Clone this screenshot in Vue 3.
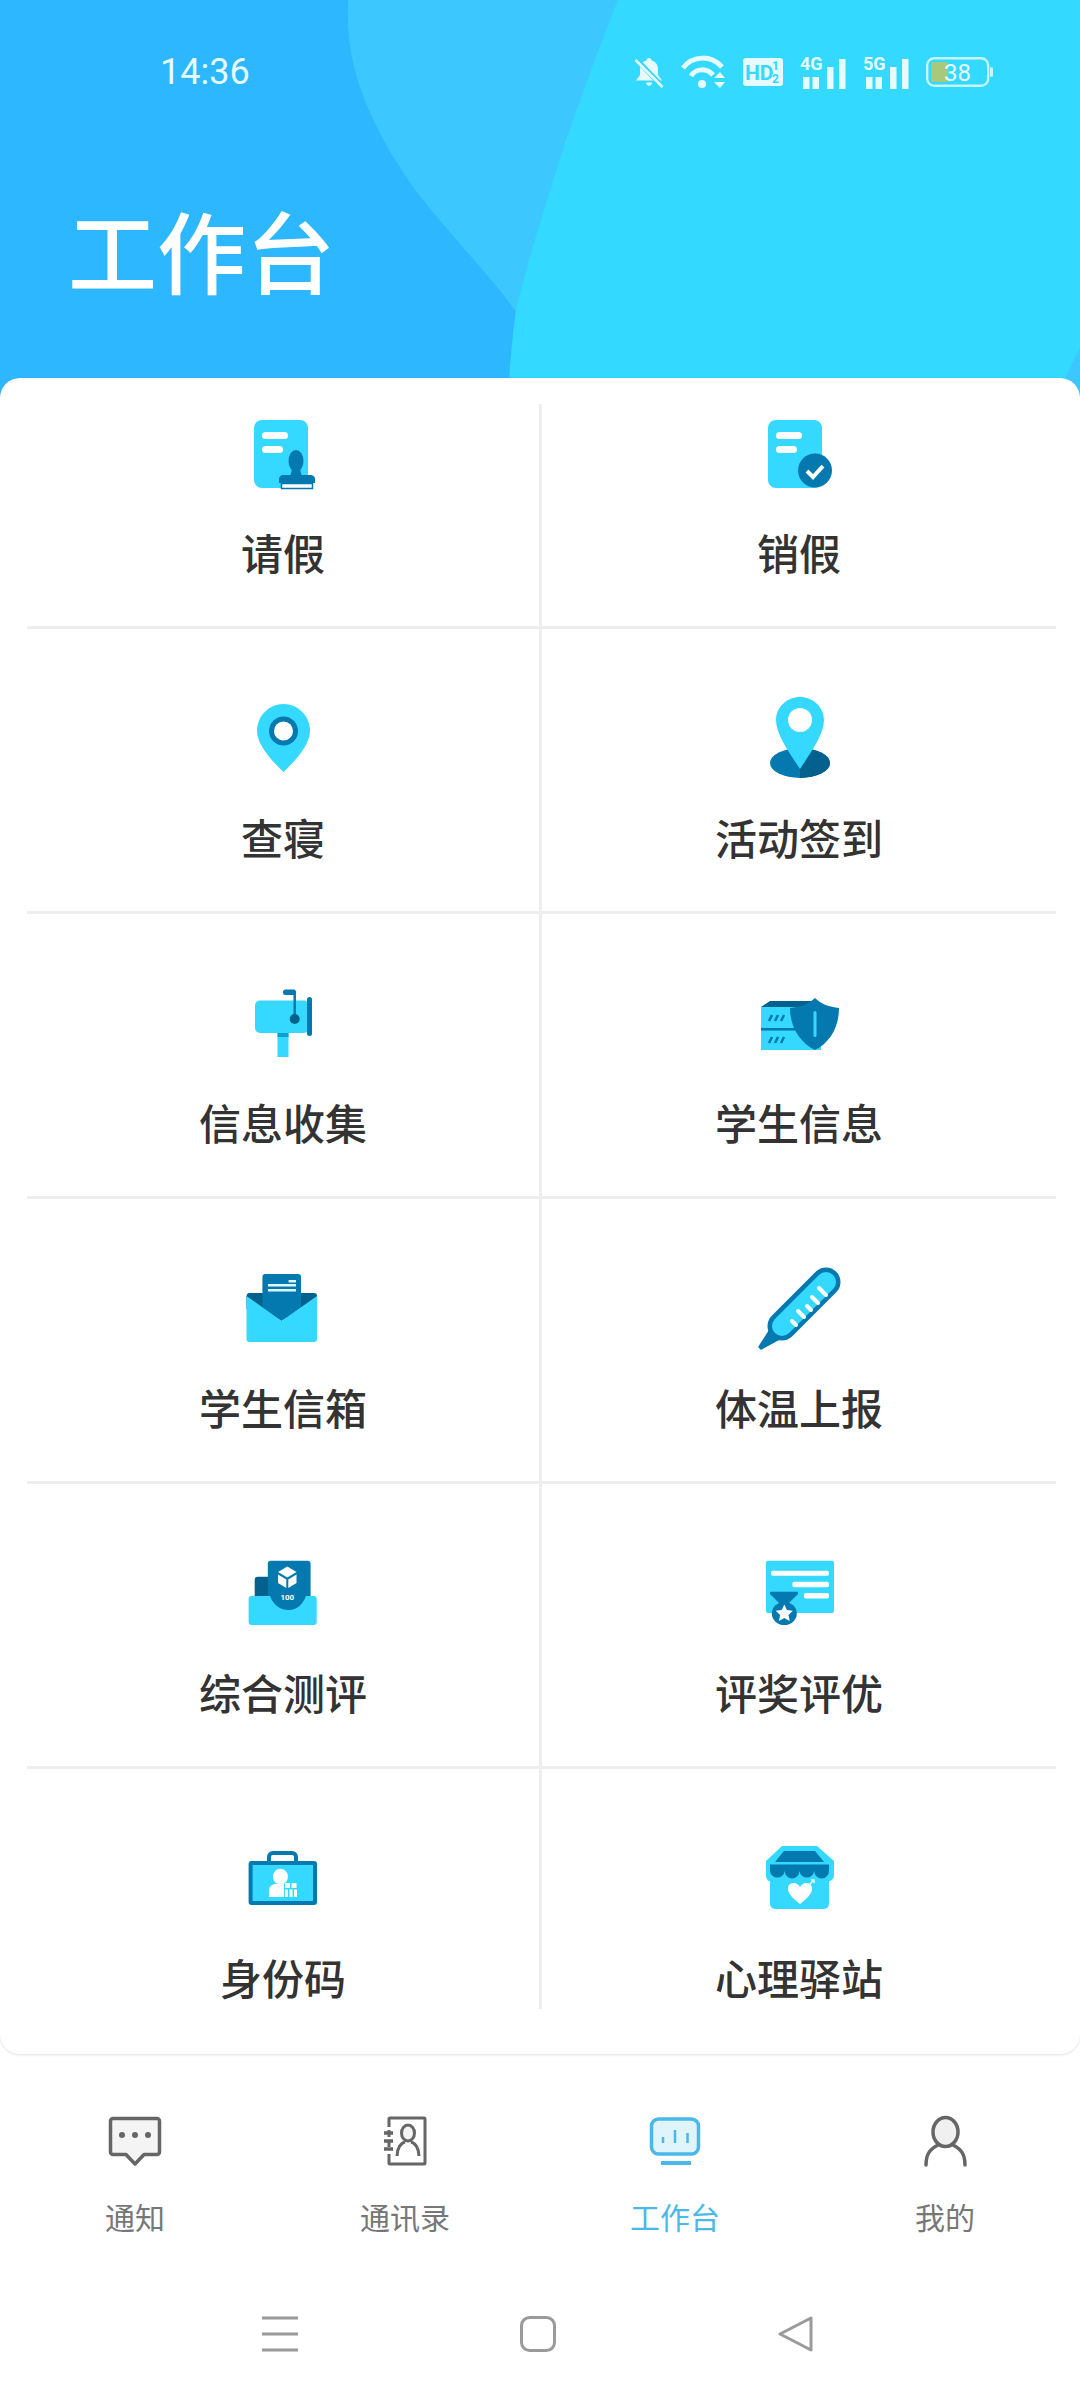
<script setup>
const tabs = [
  { key: 'notice', label: '通知' },
  { key: 'contacts', label: '通讯录' },
  { key: 'desk', label: '工作台', active: true },
  { key: 'me', label: '我的' }
]
</script>

<template>
  <div class="page">
    <header class="hero">
      <svg class="hero-bg" width="1080" height="400" viewBox="0 0 1080 400">
        <rect width="1080" height="400" fill="#2cb7ff" />
        <path d="M348 0C346 45 355 80 372 117C385 145 398 165 413 187C432 212 450 232 468 253C485 272 500 290 518 314L620 200L640 0Z" fill="#3cc8ff" />
        <path d="M618 0C600 45 580 100 565 143C550 190 528 260 516 310C512 340 510 360 508 400H1080V0Z" fill="#33d9ff" />
        <path d="M1058 400C1064 380 1072 362 1080 348V400Z" fill="#3cc8ff" />
      </svg>
      <div class="status">
        <span class="time">14:36</span>
        <div class="status-icons">
          <svg width="30" height="32" viewBox="0 0 30 32" fill="#e6fbff">
            <path d="M15 2c1.500 0 2.500 1 2.600 2.400C22 5.500 24 9 24 13v6l4 5.500H2L6 19v-6c0-4 2-7.500 6.400-8.600C12.500 3 13.500 2 15 2zM12 26.500h6c0 2-1.300 3.200-3 3.200s-3-1.200-3-3.200z" />
            <path d="M2 3l26 27" stroke="#33d9ff" stroke-width="5" />
            <path d="M1.500 4l27 27" stroke="#e6fbff" stroke-width="2.500" />
          </svg>
          <svg width="45" height="34" viewBox="0 0 45 34" fill="none" stroke="#e6fbff" stroke-width="5">
            <path d="M2 13C12 0 30 0 41 12" />
            <path d="M10 21C15 13 26 13 32 20" />
            <circle cx="21" cy="29" r="4" fill="#e6fbff" stroke="none" />
            <path d="M39 17l5 6H33zM33 27h11l-5 6z" fill="#e6fbff" stroke="none" />
          </svg>
          <svg width="40" height="28" viewBox="0 0 40 28">
            <rect width="40" height="28" rx="3" fill="#e6fbff" />
            <text x="2" y="22" class="hd">HD</text>
            <text x="29" y="12" class="hd-small">1</text>
            <text x="29" y="25" class="hd-small">2</text>
          </svg>
          <svg class="net-icon" width="46" height="42" viewBox="0 -8 46 42" fill="#e6fbff">
            <text x="0" y="15" class="net">4G</text>
            <rect x="3" y="22" width="6.500" height="12" />
            <rect x="12.500" y="22" width="6.500" height="12" />
            <rect x="27" y="12" width="6.500" height="22" />
            <rect x="39" y="4" width="6.500" height="30" />
          </svg>
          <svg class="net-icon" width="46" height="42" viewBox="0 -8 46 42" fill="#e6fbff">
            <text x="0" y="15" class="net">5G</text>
            <rect x="3" y="22" width="6.500" height="12" />
            <rect x="12.500" y="22" width="6.500" height="12" />
            <rect x="27" y="12" width="6.500" height="22" />
            <rect x="39" y="4" width="6.500" height="30" />
          </svg>
          <svg width="68" height="30" viewBox="0 0 68 30">
            <rect x="1.200" y="1.200" width="61" height="27.600" rx="7" fill="none" stroke="#c5f5ff" stroke-width="2.400" />
            <rect x="5" y="5" width="17" height="20" rx="2" fill="#a8c87c" />
            <text x="18" y="24" class="batt">38</text>
            <rect x="64" y="10" width="3" height="10" rx="1.500" fill="#c5f5ff" />
          </svg>
        </div>
      </div>
      <h1 class="title">工作台</h1>
    </header>

    <main class="card">
      <div class="grid">
        <!-- 请假 -->
        <div class="cell first left">
          <svg class="icon" width="120" height="100" viewBox="0 0 120 100">
            <rect x="31" y="16" width="54" height="68" rx="8" fill="#35d9ff" />
            <rect x="39" y="28" width="26" height="7" rx="3.500" fill="#fff" />
            <rect x="39" y="42" width="21" height="7" rx="3.500" fill="#fff" />
            <ellipse cx="73" cy="57" rx="7.500" ry="11" fill="#0479b0" />
            <path d="M69 62h8c0 5 1 9 3 10H66c2-1 3-5 3-10z" fill="#0479b0" />
            <path d="M59 71h28a5 5 0 0 1 5 3v5H56v-5a5 5 0 0 1 3-3z" fill="#0479b0" />
            <rect x="58.500" y="79.500" width="31" height="5" fill="#fff" stroke="#0479b0" stroke-width="1.500" />
          </svg>
          <span class="label">请假</span>
        </div>
        <!-- 销假 -->
        <div class="cell first">
          <svg class="icon" width="120" height="100" viewBox="0 0 120 100">
            <rect x="29" y="16" width="54" height="68" rx="8" fill="#35d9ff" />
            <rect x="37" y="28" width="26" height="7" rx="3.500" fill="#fff" />
            <rect x="37" y="42" width="21" height="7" rx="3.500" fill="#fff" />
            <circle cx="76" cy="66.500" r="17" fill="#0479b0" />
            <path d="M68 67l6 6 10-11" fill="none" stroke="#fff" stroke-width="4" />
          </svg>
          <span class="label">销假</span>
        </div>
        <!-- 查寝 -->
        <div class="cell left">
          <svg class="icon" width="120" height="100" viewBox="0 0 120 100">
            <path d="M60.500 15C75 15 87 27 87 42C87 56 72 72 60.500 83C49 72 34 56 34 42C34 27 46 15 60.500 15z" fill="#35d9ff" />
            <circle cx="60.500" cy="42" r="14.500" fill="#0479b0" />
            <circle cx="60.500" cy="42" r="9.500" fill="#fff" />
          </svg>
          <span class="label">查寝</span>
        </div>
        <!-- 活动签到 -->
        <div class="cell">
          <svg class="icon" width="120" height="100" viewBox="0 0 120 100">
            <ellipse cx="61" cy="74" rx="30" ry="15" fill="#0479b0" />
            <path d="M61 59A30 15 0 0 1 61 89z" fill="#04608c" />
            <path d="M61 8C74 8 85 18 85 31C85 46 70 66 61 80C52 66 37 46 37 31C37 18 48 8 61 8z" fill="#35d9ff" />
            <circle cx="61" cy="31" r="12" fill="#fff" />
          </svg>
          <span class="label">活动签到</span>
        </div>
        <!-- 信息收集 -->
        <div class="cell left">
          <svg class="icon" width="120" height="100" viewBox="0 0 120 100">
            <rect x="54.500" y="59" width="11" height="24" fill="#35d9ff" />
            <rect x="54.500" y="59" width="11" height="4" fill="#0a9fd0" />
            <rect x="32" y="26.500" width="54" height="32.500" rx="5" fill="#35d9ff" />
            <rect x="84" y="23" width="5" height="39" rx="2.500" fill="#0479b0" />
            <path d="M71.700 18V45" stroke="#0479b0" stroke-width="2.500" />
            <rect x="60" y="15.500" width="13" height="5.500" rx="2.500" fill="#0479b0" />
            <circle cx="71.700" cy="45" r="5" fill="#04608c" />
          </svg>
          <span class="label">信息收集</span>
        </div>
        <!-- 学生信息 -->
        <div class="cell">
          <svg class="icon" width="120" height="100" viewBox="0 0 120 100">
            <rect x="22" y="33" width="60" height="43" fill="#35d9ff" />
            <path d="M22 33l9-6H78V33z" fill="#04608c" />
            <rect x="22" y="54" width="40" height="2.500" fill="#0479b0" />
            <path d="M30 47l3-6M36 47l3-6M42 47l3-6M30 69l3-6M36 69l3-6M42 69l3-6" stroke="#0479b0" stroke-width="2.500" />
            <path d="M76 24C82 30 90 33 100 34C100 52 92 68 76 76C60 68 51 52 51 34C61 33 70 30 76 24z" fill="#0479b0" />
            <rect x="74.500" y="37" width="3" height="26" rx="1.500" fill="#35d9ff" />
          </svg>
          <span class="label">学生信息</span>
        </div>
        <!-- 学生信箱 -->
        <div class="cell left">
          <svg class="icon" width="120" height="100" viewBox="0 0 120 100">
            <path d="M26 34H91a3 3 0 0 1 3 3V50H23.500V37a3 3 0 0 1 2.500-3z" fill="#04608c" />
            <path d="M42 15H75a3 3 0 0 1 3 3V50L58.500 62L39.400 50V18a3 3 0 0 1 2.600-3z" fill="#0479b0" />
            <path d="M65.600 22.300H73M45 26.300H73M45 31.300H73" stroke="#dff7ff" stroke-width="2.500" />
            <path d="M23.500 37L58.500 62L94 37V80a3 3 0 0 1-3 3H26.500a3 3 0 0 1-3-3z" fill="#35d9ff" />
          </svg>
          <span class="label">学生信箱</span>
        </div>
        <!-- 体温上报 -->
        <div class="cell">
          <svg class="icon" width="120" height="100" viewBox="0 0 120 100">
            <path d="M34 66L20 88L22 90L44 78z" fill="#0479b0" stroke="#0479b0" stroke-width="1.500" stroke-linejoin="round" />
            <path d="M87 23L43 67" stroke="#0479b0" stroke-width="29" stroke-linecap="round" />
            <path d="M87 23L43 67" stroke="#35d9ff" stroke-width="20" stroke-linecap="round" />
            <path d="M57 66L53 62M65 58L59 52M72 51L68 47M79 44L73 38M87 36L80 29" stroke="#fff" stroke-width="4" stroke-linecap="round" />
          </svg>
          <span class="label">体温上报</span>
        </div>
        <!-- 综合测评 -->
        <div class="cell left">
          <svg class="icon" width="120" height="100" viewBox="0 0 120 100">
            <rect x="31.700" y="32.700" width="25" height="30" rx="3" fill="#04608c" />
            <path d="M25.600 55a3 3 0 0 1 3-3H90.700a3 3 0 0 1 3 3V78a3 3 0 0 1-3 3H28.600a3 3 0 0 1-3-3z" fill="#35d9ff" />
            <path d="M47.800 16.700H84.600a3 3 0 0 1 3 3V52H83C80 60 74 66 66 66C56 66 50 60 47 52H44.800V19.700a3 3 0 0 1 3-3z" fill="#0479b0" />
            <path d="M64.300 22.500L73.500 28L64.300 33.500L55.100 28z" fill="#fff" />
            <path d="M55 30.500L63.300 35.500V44L55 39zM65.300 35.500L73.500 30.500V39L65.300 44z" fill="#fff" />
            <text x="64.300" y="56" text-anchor="middle" class="score">100</text>
          </svg>
          <span class="label">综合测评</span>
        </div>
        <!-- 评奖评优 -->
        <div class="cell">
          <svg class="icon" width="120" height="100" viewBox="0 0 120 100">
            <rect x="27" y="16.700" width="68" height="52.300" rx="2" fill="#35d9ff" />
            <rect x="32" y="26.700" width="58" height="5" rx="2" fill="#fff" />
            <rect x="53.400" y="37.700" width="36.600" height="5.500" rx="2" fill="#fff" />
            <rect x="65" y="49" width="25" height="5.500" rx="2" fill="#fff" />
            <path d="M31 47.700H59V50L49 60H41L31 50z" fill="#0479b0" />
            <ellipse cx="45.300" cy="69.500" rx="12.500" ry="11.500" fill="#0479b0" />
            <path d="M45.300 60.500l2.600 5.600 6 .7-4.400 4.100 1.200 6-5.400-3-5.400 3 1.200-6-4.400-4.100 6-.7z" fill="#fff" />
          </svg>
          <span class="label">评奖评优</span>
        </div>
        <!-- 身份码 -->
        <div class="cell left last">
          <svg class="icon" width="120" height="100" viewBox="0 0 120 100">
            <rect x="46" y="24" width="27" height="12" rx="4" fill="#fff" stroke="#0479b0" stroke-width="4" />
            <rect x="27.600" y="34" width="64.400" height="40" rx="1" fill="#35d9ff" stroke="#0479b0" stroke-width="4" />
            <ellipse cx="57.400" cy="47.700" rx="7.500" ry="8" fill="#fff" />
            <path d="M46 68V61C46 57 50 55 53 55H61V68z" fill="#fff" />
            <path d="M62 54h5v5h-5zM68.500 54h5v5h-5zM62 60.500h3v7.500h-3zM66.500 60.500h3v7.500h-3zM71 60.500h3v7.500h-3z" fill="#fff" />
          </svg>
          <span class="label">身份码</span>
        </div>
        <!-- 心理驿站 -->
        <div class="cell last">
          <svg class="icon" width="120" height="100" viewBox="0 0 120 100">
            <path d="M43 17H78L95 32V46C95 50 92 52 90 52V75a5 5 0 0 1-5 5H36a5 5 0 0 1-5-5V52C29 52 27 50 27 46V32z" fill="#35d9ff" />
            <path d="M45 22H76L85 33H36z" fill="#0479b0" />
            <path d="M31 35.500H90V42A7.400 7.400 0 0 1 75.200 42A7.400 7.400 0 0 1 60.500 42A7.400 7.400 0 0 1 45.700 42A7.400 7.400 0 0 1 31 42z" fill="#0479b0" />
            <path d="M61 75C52 68 49 64 49 59.500C49 55.500 52 54 54.500 54C57.500 54 60 56 61 58C62 56 64.500 54 67.500 54C70 54 73 55.500 73 59.500C73 64 70 68 61 75z" fill="#fff" />
            <path d="M69 57L75 51M72 51H75V54" fill="none" stroke="#dff7ff" stroke-width="1.500" />
          </svg>
          <span class="label">心理驿站</span>
        </div>
      </div>
    </main>

    <nav class="tabbar">
      <div v-for="tab in tabs" :key="tab.key" class="tab" :class="{ active: tab.active }">
        <svg v-if="tab.key === 'notice'" width="60" height="60" viewBox="0 0 60 60">
          <path d="M8 8.500H52a2.500 2.500 0 0 1 2.500 2.500V42a2.500 2.500 0 0 1-2.500 2.500H39L30 54L21 44.500H8A2.500 2.500 0 0 1 5.500 42V11A2.500 2.500 0 0 1 8 8.500z" fill="#f4f4f4" stroke="#666" stroke-width="3.500" stroke-linejoin="round" />
          <circle cx="17" cy="25" r="3" fill="#666" />
          <circle cx="30" cy="25" r="3" fill="#666" />
          <circle cx="43" cy="25" r="3" fill="#666" />
        </svg>
        <svg v-else-if="tab.key === 'contacts'" width="60" height="60" viewBox="0 0 60 60" fill="none" stroke="#666" stroke-width="3">
          <path d="M14 17V9a1 1 0 0 1 1-1H49a1 1 0 0 1 1 1V53a1 1 0 0 1-1 1H15a1 1 0 0 1-1-1V44M14 27V20M14 37V30" />
          <path d="M9 23H18M9 31H18M9 39H18" stroke-width="3.500" />
          <ellipse cx="33" cy="23" rx="6.500" ry="8" fill="#f4f4f4" />
          <path d="M22 46C22 38 26 33 30 32M44 46C44 38 40 33 36 32" />
        </svg>
        <svg v-else-if="tab.key === 'desk'" width="60" height="60" viewBox="0 0 60 60" fill="none" stroke="#4ab8e8" stroke-width="3.500">
          <rect x="6.500" y="9" width="47" height="35" rx="7" fill="#e0f4fc" />
          <path d="M18 27V33M30 20V33M42.500 23V33" stroke-width="2.500" />
          <path d="M16 53H46" stroke-width="4" />
        </svg>
        <svg v-else width="60" height="60" viewBox="0 0 60 60" fill="none" stroke="#666" stroke-width="3.500">
          <ellipse cx="30.500" cy="22" rx="12.500" ry="14.500" fill="#f0f0f0" />
          <path d="M11 55C11 44 15 39 23 35M50 55C50 44 46 39 38 35" stroke-linecap="round" />
        </svg>
        <span class="tab-label">{{ tab.label }}</span>
      </div>
    </nav>

    <div class="sysnav">
      <svg width="36" height="36" viewBox="0 0 36 36" stroke="#9a9a9a" stroke-width="3">
        <path d="M0 2H36M0 18H36M0 34H36" />
      </svg>
      <svg width="36" height="36" viewBox="0 0 36 36" fill="none" stroke="#9a9a9a" stroke-width="3">
        <rect x="1.500" y="1.500" width="33" height="33" rx="8" />
      </svg>
      <svg width="36" height="36" viewBox="0 0 36 36" fill="none" stroke="#9a9a9a" stroke-width="3" stroke-linejoin="round">
        <path d="M33 2V34L2 18z" />
      </svg>
    </div>
  </div>
</template>

<style>
body {
  background: #fff;
}
</style>

<style scoped>
.page {
  width: 1080px;
  height: 2400px;
  overflow: hidden;
  position: relative;
  background: #fff;
  font-family: "Noto Sans CJK SC", "Noto Sans", sans-serif;
}

.hero {
  position: relative;
  height: 400px;
  margin-bottom: -22px;
  padding: 55px 0 0 68px;
  box-sizing: border-box;
}

.hero-bg {
  position: absolute;
  top: 0;
  left: 0;
}

.status {
  position: relative;
  display: flex;
  align-items: center;
  justify-content: space-between;
  height: 34px;
  padding: 0 86px 0 160px;
  margin-left: -68px;
}

.time {
  font-family: Roboto, sans-serif;
  font-size: 36px;
  color: #e6fbff;
}

.status-icons {
  display: flex;
  align-items: center;
  gap: 17px;
}

.net-icon {
  margin-top: -8px;
}

.hd {
  font-family: Roboto, sans-serif;
  font-size: 21px;
  font-weight: 700;
  fill: #33d9ff;
}

.hd-small {
  font-family: Roboto, sans-serif;
  font-size: 12px;
  font-weight: 700;
  fill: #33d9ff;
}

.net {
  font-family: Roboto, sans-serif;
  font-size: 18px;
  font-weight: 700;
}

.batt {
  font-family: Roboto, sans-serif;
  font-size: 24px;
  fill: #e6fbff;
}

.title {
  position: relative;
  margin: 110px 0 0;
  font-size: 89px;
  font-weight: 500;
  line-height: 100px;
  color: #fff;
}

.card {
  position: relative;
  height: 1676px;
  background: #fff;
  border-radius: 20px;
  box-sizing: border-box;
  padding: 26px 24px 0 27px;
  box-shadow: 0 1px 3px rgba(0, 0, 0, 0.12);
}

.grid {
  display: grid;
  grid-template-columns: 515px 514px;
  grid-template-rows: 225px repeat(4, 285px) 240px;
}

.cell {
  display: flex;
  flex-direction: column;
  align-items: center;
  padding-top: 60px;
  box-sizing: border-box;
  border-bottom: 3px solid #eeeeee;
}

.cell.first {
  padding-top: 0;
}

.cell.left {
  border-right: 3px solid #eeeeee;
}

.cell.last {
  border-bottom: none;
}

.icon {
  display: block;
  flex-shrink: 0;
}

.label {
  margin-top: 24px;
  font-size: 42px;
  font-weight: 500;
  line-height: 48px;
  color: #333;
}

.score {
  font-family: Roboto, sans-serif;
  font-size: 8px;
  font-weight: 700;
  fill: #fff;
}

.tabbar {
  display: grid;
  grid-template-columns: repeat(4, 270px);
  height: 216px;
  padding-top: 54px;
  box-sizing: border-box;
  margin-top: 2px;
}

.tab {
  display: flex;
  flex-direction: column;
  align-items: center;
  color: #777;
}

.tab.active {
  color: #4ab8e8;
}

.tab-label {
  margin-top: 28px;
  font-size: 30px;
  line-height: 36px;
}

.sysnav {
  display: flex;
  justify-content: center;
  gap: 222px;
  padding-top: 44px;
  padding-right: 4px;
}
</style>
